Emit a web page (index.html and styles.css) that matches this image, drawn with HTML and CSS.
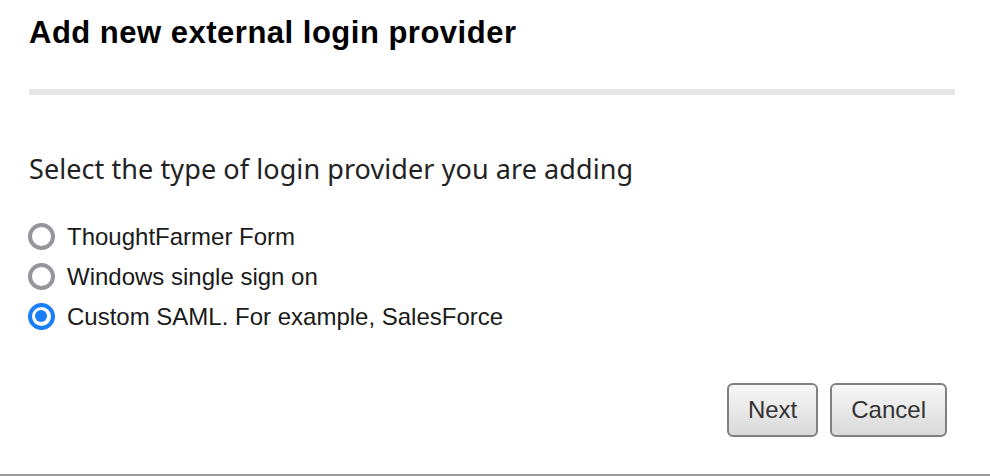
FILE: index.html
```html
<!DOCTYPE html>
<html lang="en">
<head>
<meta charset="utf-8">
<title>Add new external login provider</title>
<link rel="stylesheet" href="styles.css">
</head>
<body>
<div class="dialog">
  <header class="dialog-header">
    <h1 class="dialog-title">Add new external login provider</h1>
    <div class="separator"></div>
  </header>
  <main class="dialog-body">
    <p class="prompt">Select the type of login provider you are adding</p>
    <div class="options">
      <label class="option"><span class="radio"></span><span class="option-label">ThoughtFarmer Form</span></label>
      <label class="option"><span class="radio"></span><span class="option-label">Windows single sign on</span></label>
      <label class="option"><span class="radio checked"></span><span class="option-label">Custom SAML. For example, SalesForce</span></label>
    </div>
  </main>
  <footer class="dialog-footer">
    <button class="btn" type="button">Next</button>
    <button class="btn" type="button">Cancel</button>
  </footer>
</div>
</body>
</html>
```

FILE: styles.css
```css
html, body {
  margin: 0;
  padding: 0;
  background: #ffffff;
}

.dialog {
  width: 990px;
  height: 476px;
  box-sizing: border-box;
  border-bottom: 2px solid #9a9a9a;
  display: flex;
  flex-direction: column;
  font-family: "Liberation Sans", Arial, sans-serif;
  color: #1a1a1a;
}

.dialog-header {
  padding: 14.5px 35px 0 29px;
}

.dialog-title {
  margin: 0;
  font-size: 31px;
  line-height: 36px;
  font-weight: bold;
  color: #000;
  letter-spacing: 0.5px;
}

.separator {
  margin-top: 38.5px;
  height: 6px;
  background: #e6e6e6;
}

.dialog-body {
  padding: 0 29px 0 27.5px;
}

.prompt {
  margin: 58px 0 0 1.5px;
  font-family: "Noto Sans", sans-serif;
  font-size: 27px;
  line-height: 32px;
  letter-spacing: 0.08px;
  color: #222;
}

.options {
  margin-top: 37.5px;
  display: flex;
  flex-direction: column;
  gap: 13px;
}

.option {
  display: flex;
  align-items: center;
  gap: 12.5px;
  height: 27px;
}

.radio {
  width: 27px;
  height: 27px;
  box-sizing: border-box;
  border: 4px solid #95959c;
  border-radius: 50%;
  display: flex;
  align-items: center;
  justify-content: center;
  flex: none;
}

.radio.checked {
  border-color: #1a7ef7;
}

.radio.checked::after {
  content: "";
  width: 12px;
  height: 12px;
  border-radius: 50%;
  background: #1a7ef7;
}

.option-label {
  font-size: 24px;
  line-height: 27px;
  color: #1a1a1a;
}

.dialog-footer {
  margin-top: auto;
  padding: 0 43px 37px 0;
  display: flex;
  justify-content: flex-end;
  gap: 12px;
}

.btn {
  height: 54px;
  padding: 0 19px;
  font-family: "Liberation Sans", Arial, sans-serif;
  font-size: 24px;
  color: #333;
  background: linear-gradient(#f7f7f7, #d9d9d9);
  border: 2px solid #808080;
  border-radius: 6px;
}
```
